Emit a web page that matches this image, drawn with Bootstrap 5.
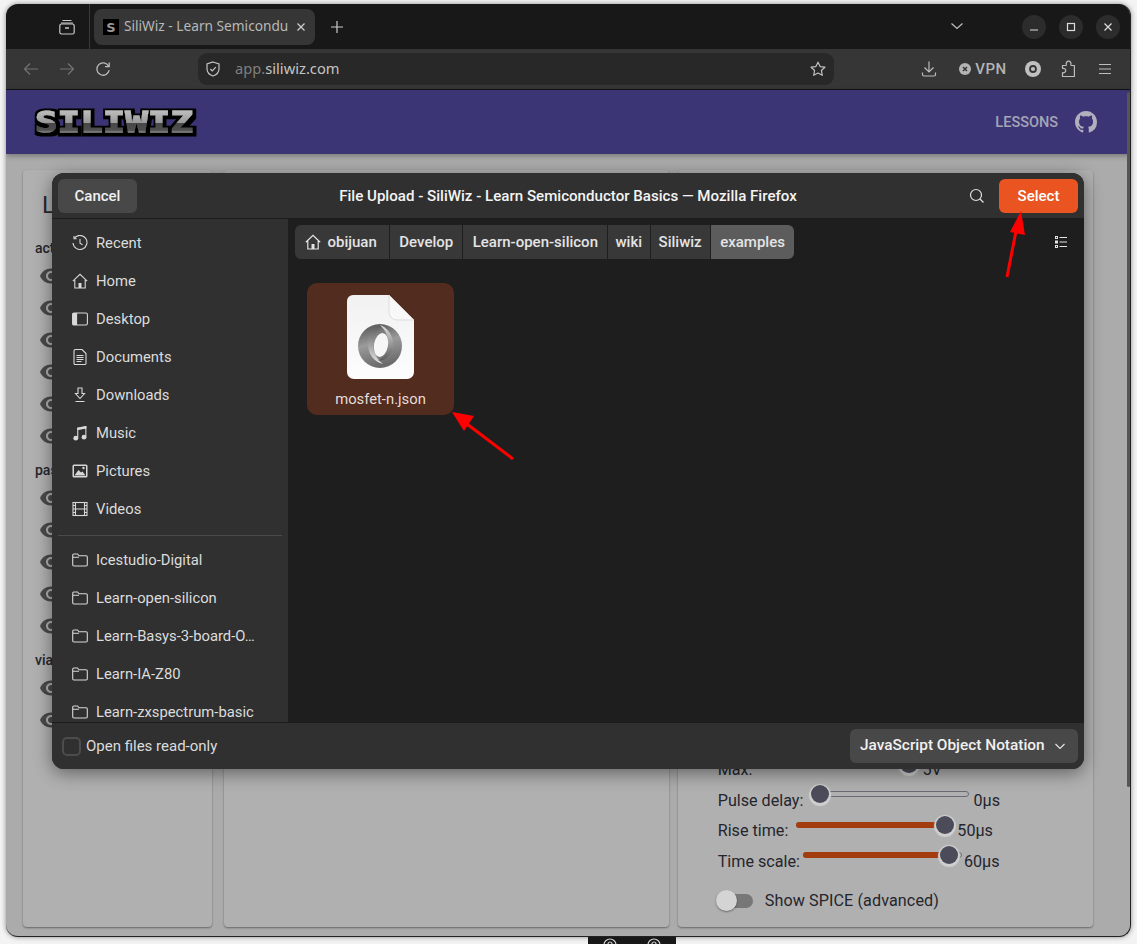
<!DOCTYPE html>
<html lang="en">
<head>
  <meta charset="UTF-8">
  <title>SiliWiz - File Upload</title>
  <link rel="stylesheet" href="https://cdn.jsdelivr.net/npm/bootstrap@5.3.0/dist/css/bootstrap.min.css">
  <style>
    html, body { height: 100%; }
    body { background: #f3f3f3; overflow: hidden; font-family: "Noto Sans", sans-serif; padding-top: 4px; position: relative; }
    svg { display: block; flex: none; }

    /* browser window */
    .ff-window { margin-left: 6px; width: 1125px; height: 933px; border-radius: 12px; overflow: hidden; background: #ababab; box-shadow: 0 0 5px rgba(0,0,0,.45); border-bottom: 1px solid #222; border-right: 1px solid #222; }
    .tab-strip { height: 45px; background: #181818; color: #ccc; }
    .tab-left { width: 84px; height: 45px; border-right: 1px solid #3a3a3a; padding-right: 14px; }
    .ff-tab { width: 221px; height: 36px; margin-left: 4px; margin-top: 5px; background: #363636; border-radius: 8px; padding: 0 9px; color: #b8b8b8; font-size: 13.7px; white-space: nowrap; }
    .ff-tab-title { margin-left: 5px; padding-bottom: 1px; }
    .new-tab { margin: 8px 0 0 15px; }
    .chev { margin-left: auto; margin-right: 45px; margin-top: 15px; }
    .win-ctl { width: 24px; height: 24px; border-radius: 50%; background: #2c2c2c; margin-left: 13px; }
    .win-ctls { margin: 11px 10px 0 0; }

    .tool-bar { height: 41px; background: #363636; border-bottom: 1px solid #111; padding: 0 7px; color: #bbb; }
    .tool-btn { width: 36px; height: 40px; }
    .url-bar { width: 636px; height: 32px; margin-left: 77px; background: #282828; border-radius: 9px; padding: 0 8px 0 7px; font-size: 14.7px; color: #c4c4c4; }
    .url-bar span { color: #7f7f7f; }
    .url-text { margin-left: 14px; padding-bottom: 2px; }
    .vpn-btn { width: 58px; height: 40px; margin-left: 7px; margin-right: 3px; font-size: 15px; color: #b4b4b4; font-weight: 500; letter-spacing: .5px; font-family: Roboto, sans-serif; }

    /* site behind the dialog */
    .page-area { height: 847px; font-family: Roboto, sans-serif; color: #25252d; }
    .site-nav { height: 64px; background: #3c3575; padding: 0 33px 0 24px; box-shadow: 0 2px 5px rgba(0,0,0,.3); }
    .lessons-link { font-size: 14.5px; font-weight: 500; color: #a5a5b5; margin: 2px 17px 0 0; text-decoration: none; }
    .panel-row { padding: 16px 37px 10px 17px; height: 783px; gap: 12px; }
    .dim-card { background: #b0b0b0; border: 0; border-radius: 4px; box-shadow: 0 1px 2px rgba(0,0,0,.4); --bs-card-bg: #b0b0b0; }
    .layers-card { width: 189px; padding: 0 12px; }
    .layers-title { font-size: 24px; line-height: 30px; margin: 20px 0 16px 7px; color: #2b2b2b; font-weight: 400; }
    .group-label { font-size: 14px; line-height: 24px; color: #26262e; font-weight: 500; }
    .group-label.later { margin-top: 6px; }
    .eye-row { height: 32px; padding-left: 4px; }
    .mid-card { width: 446px; }
    .ctl-card { width: 416px; margin-left: -3px; padding: 0 40px 14px 40px; }
    .ctl-line { height: 30.5px; font-size: 16.15px; white-space: nowrap; }
    .sl-track { position: relative; height: 6px; margin-top: -13px; border: 1px solid #6b6b78; border-radius: 3px; }
    .sl-fill { position: absolute; left: -1px; top: -1px; bottom: -1px; background: #a33d10; border-radius: 3px; }
    .sl-knob { position: absolute; top: 50%; width: 18px; height: 18px; margin: -9px 0 0 -9px; border-radius: 50%; background: #4b4b59; box-shadow: 0 1px 1px 2px #cfcfcf; }
    .sw-line { height: 24px; margin-top: 12px; font-size: 16.15px; letter-spacing: .1px; }
    .sw-track { position: relative; width: 37px; height: 14px; margin-left: -2px; margin-right: 12px; }
    .sw-track::before { content: ""; position: absolute; left: 10px; right: 0; top: 0; bottom: 0; background: #777; border-radius: 7px; }
    .sw-knob { position: absolute; left: 0; top: -4px; width: 21px; height: 21px; border-radius: 50%; background: #d4d4d4; box-shadow: 0 1px 2px rgba(0,0,0,.4); }
    .page-scroll { position: absolute; left: 1121px; top: 2px; width: 3px; height: 695px; background: #555; border-radius: 2px; }

    /* GTK file chooser */
    .file-dialog { position: absolute; left: 46px; top: 83px; width: 1032px; height: 596px; background: #1e1e1e; border-radius: 12px; box-shadow: 0 4px 18px rgba(0,0,0,.45); overflow: hidden; color: #eee; font-size: 15px; }
    .dlg-head { height: 46px; background: #303030; border-bottom: 1px solid #1c1c1c; padding: 0 6px; }
    .dlg-btn { height: 34px; width: 79px; border-radius: 6px; border: 0; font-size: 15px; font-weight: 500; padding: 1px 0 0; color: #f0f0f0; --bs-btn-hover-color: #f0f0f0; }
    .dlg-cancel { background: #484848; }
    .dlg-select { background: #e95420; color: #fff; margin-left: 14px; }
    .dlg-title { font-weight: 500; color: #f4f4f4; font-size: 15.1px; padding: 1px 0 0 30px; }
    .dlg-body { height: 503px; }
    .places { width: 236px; background: #303030; overflow: hidden; padding: 5px 0 0; }
    .place-row { height: 38px; padding-left: 20px; gap: 8px; color: #dcdcdc; font-size: 14.8px; white-space: nowrap; background: transparent; border: 0; border-radius: 0; --bs-list-group-bg: transparent; }
    .place-row svg { width: 16px; height: 16px; }
    .place-sep { margin: 7px 6px 5px; height: 1px; background: #4a4a4a; }
    .files-pane { background: #1e1e1e; position: relative; padding: 6px 7px; }
    .path-bar { height: 34px; border-radius: 6px; overflow: hidden; font-weight: 500; color: #e4e4e4; }
    .path-seg { height: 34px; background: #383838; border-right: 1px solid #1e1e1e; padding: 0 9px 0 9.5px; white-space: nowrap; }
    .path-seg.seg-home { padding-right: 12px; gap: 7px; }
    .path-seg.seg-tight { padding: 0 8px 0 7.5px; }
    .path-seg.now { background: #5c5c5c; border-right: 0; }
    .view-toggle { margin-left: auto; margin-right: 10px; }
    .file-tile { width: 147px; height: 132px; margin: 24px 0 0 12px; background: #522c1e; border-radius: 10px; padding-top: 12px; color: #e6dcd8; font-size: 14.8px; }
    .file-name { margin-top: 9px; }
    .dlg-foot { height: 47px; background: #303030; border-top: 1px solid #1c1c1c; padding: 0 6px 0 10px; color: #dcdcdc; font-size: 15px; }
    .ro-check { width: 19px; height: 19px; border: 2px solid #4c4c4c; border-radius: 5px; margin-right: 5px; }
    .filter-btn { margin-left: auto; width: 228px; height: 34px; background: #484848; border-radius: 6px; padding: 0 12px 0 10px; font-weight: 500; color: #f0f0f0; font-size: 15.4px; }

    .arrow-layer { position: absolute; left: 0; top: 0; pointer-events: none; }
    .cut-strip { margin-left: 588px; width: 88px; height: 8px; background: #181818; overflow: hidden; }
  </style>
</head>
<body>
  <svg width="0" height="0" style="position:absolute">
    <symbol id="ic-eye" viewBox="0 0 24 24"><path fill="#4a4a4a" d="M12 4.500C7 4.500 2.730 7.610 1 12c1.730 4.390 6 7.500 11 7.500s9.270-3.110 11-7.500c-1.730-4.390-6-7.500-11-7.500zM12 17c-2.760 0-5-2.240-5-5s2.240-5 5-5 5 2.240 5 5-2.240 5-5 5zm0-8c-1.660 0-3 1.340-3 3s1.340 3 3 3 3-1.340 3-3-1.340-3-3-3z"/></symbol>
    <symbol id="ic-folder" viewBox="0 0 16 16"><path fill="none" stroke="#d8d8d8" stroke-width="1.100" d="M.7 3.200a1.200 1.200 0 0 1 1.200-1.200h3.600l1.500 1.800h7.100a1.200 1.200 0 0 1 1.200 1.200v7.800a1.200 1.200 0 0 1-1.200 1.200H1.900a1.200 1.200 0 0 1-1.200-1.200zM.7 5.300H7"/></symbol>
  </svg>

  <div class="ff-window d-flex flex-column">
    <!-- tabs -->
    <div class="tab-strip d-flex align-items-start">
      <div class="tab-left d-flex align-items-center justify-content-end">
        <svg width="16" height="16" viewBox="0 0 16 16" fill="none" stroke="#c8c8c8" stroke-width="1.2"><path d="M3.500 1.500h9M2 4h12"/><rect x=".8" y="5" width="14.400" height="10" rx="1.800"/><path d="M6 9h4" stroke-width="1.600"/></svg>
      </div>
      <div class="ff-tab d-flex align-items-center">
        <svg width="16" height="16" viewBox="0 0 16 16"><rect width="16" height="16" fill="#000"/><text x="8" y="13" text-anchor="middle" font-family="DejaVu Sans" font-weight="700" font-size="13" fill="#999">S</text></svg>
        <div class="ff-tab-title">SiliWiz - Learn Semicondu</div>
        <svg class="ms-auto" width="10" height="10" viewBox="0 0 10 10" stroke="#ccc" stroke-width="1.300"><path d="M1.500 1.500l7 7M8.500 1.500l-7 7"/></svg>
      </div>
      <svg class="new-tab" width="14" height="30" viewBox="0 0 14 14" stroke="#ccc" stroke-width="1.200"><path d="M7 1v12M1 7h12"/></svg>
      <svg class="chev" width="14" height="14" viewBox="0 0 14 14" fill="none" stroke="#c0c0c0" stroke-width="1.200"><path d="M1.500 4.500L7 9.500l5.500-5"/></svg>
      <div class="win-ctls d-flex">
        <div class="win-ctl d-flex align-items-center justify-content-center"><svg width="10" height="10" viewBox="0 0 10 10" stroke="#ddd" stroke-width="1.200"><path d="M1 8h8"/></svg></div>
        <div class="win-ctl d-flex align-items-center justify-content-center"><svg width="10" height="10" viewBox="0 0 10 10" fill="none" stroke="#ddd" stroke-width="1.200"><rect x="1.500" y="1.500" width="7" height="7"/></svg></div>
        <div class="win-ctl d-flex align-items-center justify-content-center"><svg width="10" height="10" viewBox="0 0 10 10" stroke="#ddd" stroke-width="1.200"><path d="M1.500 1.500l7 7M8.500 1.500l-7 7"/></svg></div>
      </div>
    </div>

    <!-- toolbar -->
    <div class="tool-bar d-flex align-items-center">
      <div class="tool-btn d-flex align-items-center justify-content-center"><svg width="16" height="16" viewBox="0 0 16 16" fill="none" stroke="#737373" stroke-width="1.200"><path d="M15 8H1.500M7 2.500L1.500 8 7 13.500"/></svg></div>
      <div class="tool-btn d-flex align-items-center justify-content-center"><svg width="16" height="16" viewBox="0 0 16 16" fill="none" stroke="#737373" stroke-width="1.200"><path d="M1 8h13.500M9 2.500L14.500 8 9 13.500"/></svg></div>
      <div class="tool-btn d-flex align-items-center justify-content-center"><svg width="16" height="16" viewBox="0 0 16 16" fill="none" stroke="#bdbdbd" stroke-width="1.300"><path d="M13.600 5.200A6.200 6.200 0 1 0 14.200 9"/><path d="M14.200 1.500v4.200H10"/></svg></div>
      <div class="url-bar d-flex align-items-center">
        <svg width="16" height="16" viewBox="0 0 16 16" fill="none" stroke="#c4c4c4" stroke-width="1.200"><path d="M8 1l6 2v5c0 3.500-2.600 5.800-6 7-3.400-1.200-6-3.500-6-7V3z"/><path d="M5.300 8l2 2 3.500-3.800"/></svg>
        <div class="url-text"><span>app.</span>siliwiz.com</div>
        <svg class="ms-auto" width="16" height="16" viewBox="0 0 16 16" fill="none" stroke="#c0c0c0" stroke-width="1.200"><path d="M8 1.200l2.100 4.400 4.800.6-3.500 3.300.9 4.800L8 12l-4.300 2.300.9-4.800L1.100 6.200l4.800-.6z" stroke-linejoin="round"/></svg>
      </div>
      <div class="tool-btn ms-auto d-flex align-items-center justify-content-center"><svg width="16" height="16" viewBox="0 0 16 16" fill="none" stroke="#bdbdbd" stroke-width="1.200"><path d="M8 .5v10M3.500 6.500L8 11l4.500-4.500M1.500 11.500v2a1.500 1.500 0 0 0 1.500 1.500h10a1.500 1.500 0 0 0 1.500-1.500v-2"/></svg></div>
      <div class="vpn-btn d-flex align-items-center justify-content-center gap-1">
        <svg width="12" height="12" viewBox="0 0 12 12"><circle cx="6" cy="6" r="6" fill="#b4b4b4"/><path d="M4 4l4 4M8 4l-4 4" stroke="#363636" stroke-width="1.500"/></svg>
        <span>VPN</span>
      </div>
      <div class="tool-btn d-flex align-items-center justify-content-center"><svg width="16" height="16" viewBox="0 0 16 16"><circle cx="8" cy="8" r="8" fill="#c0c0c0"/><circle cx="8" cy="8" r="3" fill="none" stroke="#363636" stroke-width="1.800"/></svg></div>
      <div class="tool-btn d-flex align-items-center justify-content-center"><svg width="16" height="18" viewBox="0 0 16 18" fill="none" stroke="#bdbdbd" stroke-width="1.200" stroke-linejoin="round"><path d="M1.500 5.500h3.200c.8 0 .9-.7.6-1.300-.4-.9.3-3 2.300-3s2.700 2.100 2.300 3c-.3.6-.2 1.300.6 1.300h2.900v11H1.500v-3.800c1.700.4 3.300-.6 3.300-2.200S3.200 8 1.500 8.400z"/></svg></div>
      <div class="tool-btn d-flex align-items-center justify-content-center"><svg width="14" height="12" viewBox="0 0 14 12" stroke="#bdbdbd" stroke-width="1.200"><path d="M1 1.500h12M1 6h12M1 10.500h12"/></svg></div>
    </div>

    <!-- site -->
    <div class="page-area position-relative">
      <nav class="navbar site-nav flex-nowrap">
        <svg width="172" height="36" viewBox="0 0 172 36">
          <defs>
            <linearGradient id="logoFill" gradientUnits="userSpaceOnUse" x1="0" y1="6" x2="0" y2="29"><stop offset="0" stop-color="#c0c0c0"/><stop offset=".55" stop-color="#9a9a9a"/><stop offset=".57" stop-color="#474747"/><stop offset=".88" stop-color="#505050"/><stop offset="1" stop-color="#a0a0a0"/></linearGradient>
            <filter id="logoEdge" x="-5%" y="-30%" width="110%" height="160%">
              <feMorphology in="SourceAlpha" operator="dilate" radius="2.600" result="fat"/>
              <feOffset in="fat" dx="1" dy="1" result="fatShift"/>
              <feFlood flood-color="#000"/>
              <feComposite in2="fatShift" operator="in" result="edge"/>
              <feMerge><feMergeNode in="edge"/><feMergeNode in="SourceGraphic"/></feMerge>
            </filter>
          </defs>
          <text x="5" y="28" font-family="DejaVu Sans Mono" font-weight="700" font-size="29" textLength="158" lengthAdjust="spacingAndGlyphs" fill="url(#logoFill)" stroke="url(#logoFill)" stroke-width="1.100" filter="url(#logoEdge)">SILIWIZ</text>
        </svg>
        <div class="d-flex align-items-center ms-auto">
          <a class="lessons-link" href="#">LESSONS</a>
          <svg width="22" height="22" viewBox="0 0 16 16" fill="#b0b0bc"><path d="M8 0C3.580 0 0 3.580 0 8c0 3.540 2.290 6.530 5.470 7.590.4.070.55-.17.55-.38 0-.19-.01-.82-.01-1.490-2.010.37-2.530-.49-2.690-.94-.09-.23-.48-.94-.82-1.130-.28-.15-.68-.52-.01-.53.63-.01 1.080.58 1.230.82.72 1.210 1.870.87 2.330.66.07-.52.28-.87.51-1.070-1.780-.2-3.640-.89-3.640-3.950 0-.87.31-1.590.82-2.150-.08-.2-.36-1.020.08-2.120 0 0 .67-.21 2.200.82.64-.18 1.320-.27 2-.27.68 0 1.360.09 2 .27 1.530-1.040 2.200-.82 2.200-.82.44 1.100.16 1.920.08 2.120.51.56.82 1.270.82 2.150 0 3.070-1.870 3.750-3.650 3.950.29.25.54.73.54 1.480 0 1.070-.01 1.930-.01 2.200 0 .21.15.46.55.38A8.013 8.013 0 0016 8c0-4.420-3.580-8-8-8z"/></svg>
        </div>
      </nav>

      <div class="panel-row d-flex">
        <div class="card dim-card layers-card">
          <div class="layers-title">L</div>
          <div class="group-label">active</div>
          <div class="eye-row d-flex align-items-center"><svg width="24" height="24"><use href="#ic-eye"/></svg></div>
          <div class="eye-row d-flex align-items-center"><svg width="24" height="24"><use href="#ic-eye"/></svg></div>
          <div class="eye-row d-flex align-items-center"><svg width="24" height="24"><use href="#ic-eye"/></svg></div>
          <div class="eye-row d-flex align-items-center"><svg width="24" height="24"><use href="#ic-eye"/></svg></div>
          <div class="eye-row d-flex align-items-center"><svg width="24" height="24"><use href="#ic-eye"/></svg></div>
          <div class="eye-row d-flex align-items-center"><svg width="24" height="24"><use href="#ic-eye"/></svg></div>
          <div class="group-label later">passive</div>
          <div class="eye-row d-flex align-items-center"><svg width="24" height="24"><use href="#ic-eye"/></svg></div>
          <div class="eye-row d-flex align-items-center"><svg width="24" height="24"><use href="#ic-eye"/></svg></div>
          <div class="eye-row d-flex align-items-center"><svg width="24" height="24"><use href="#ic-eye"/></svg></div>
          <div class="eye-row d-flex align-items-center"><svg width="24" height="24"><use href="#ic-eye"/></svg></div>
          <div class="eye-row d-flex align-items-center"><svg width="24" height="24"><use href="#ic-eye"/></svg></div>
          <div class="group-label later">vias</div>
          <div class="eye-row d-flex align-items-center"><svg width="24" height="24"><use href="#ic-eye"/></svg></div>
          <div class="eye-row d-flex align-items-center"><svg width="24" height="24"><use href="#ic-eye"/></svg></div>
        </div>

        <div class="card dim-card mid-card"></div>

        <div class="card dim-card ctl-card justify-content-end">
          <div class="ctl-line d-flex align-items-center">
            <span>Max:</span>
            <div class="sl-track" style="width: 125px; margin-left: 31px"><div class="sl-knob" style="left: 124px"></div></div>
            <span style="margin-left: 14px">5V</span>
          </div>
          <div class="ctl-line d-flex align-items-center">
            <span>Pulse delay:</span>
            <div class="sl-track ms-2" style="width: 158px"><div class="sl-knob" style="left: 8px"></div></div>
            <span class="ms-1">0μs</span>
          </div>
          <div class="ctl-line d-flex align-items-center">
            <span>Rise time:</span>
            <div class="sl-track ms-2" style="width: 157px"><div class="sl-fill" style="width: 148px"></div><div class="sl-knob" style="left: 148px"></div></div>
            <span class="ms-1">50μs</span>
          </div>
          <div class="ctl-line d-flex align-items-center">
            <span>Time scale:</span>
            <div class="sl-track" style="width: 159px; margin-left: 3px"><div class="sl-fill" style="width: 145px"></div><div class="sl-knob" style="left: 145px"></div></div>
            <span style="margin-left: 2px">60μs</span>
          </div>
          <div class="sw-line d-flex align-items-center">
            <div class="sw-track"><div class="sw-knob"></div></div>
            <span>Show SPICE (advanced)</span>
          </div>
        </div>
      </div>
      <div class="page-scroll"></div>

      <!-- file chooser over the page -->
      <div class="file-dialog d-flex flex-column">
        <div class="dlg-head d-flex align-items-center">
          <button class="btn dlg-btn dlg-cancel">Cancel</button>
          <div class="dlg-title flex-grow-1 text-center">File Upload - SiliWiz - Learn Semiconductor Basics — Mozilla Firefox</div>
          <svg width="16" height="16" viewBox="0 0 16 16" fill="none" stroke="#e0e0e0" stroke-width="1.200"><circle cx="7" cy="7" r="5.500"/><path d="M11 11l3.500 3.500"/></svg>
          <button class="btn dlg-btn dlg-select">Select</button>
        </div>
        <div class="dlg-body d-flex">
          <div class="places">
            <div class="list-group list-group-flush">
              <div class="list-group-item d-flex align-items-center place-row"><svg viewBox="0 0 16 16" fill="none" stroke="#d8d8d8" stroke-width="1.100"><path d="M2.300 3.300A7 7 0 1 1 1 8"/><path d="M2 1v2.700h2.700M8 4v4.300l2.600 1.500"/></svg>Recent</div>
              <div class="list-group-item d-flex align-items-center place-row"><svg viewBox="0 0 16 16" fill="none" stroke="#d8d8d8" stroke-width="1.100"><path d="M.8 8.200L8 1.300l7.200 6.900M2.800 7v8h10.400V7"/><rect x="6.500" y="10" width="3" height="5" fill="#d8d8d8" stroke="none"/></svg>Home</div>
              <div class="list-group-item d-flex align-items-center place-row"><svg viewBox="0 0 16 16" fill="none" stroke="#d8d8d8" stroke-width="1.100"><rect x=".6" y="2" width="14.800" height="12" rx="1.500"/><rect x=".6" y="2" width="4.500" height="12" fill="#d8d8d8" stroke="none"/></svg>Desktop</div>
              <div class="list-group-item d-flex align-items-center place-row"><svg viewBox="0 0 16 16" fill="none" stroke="#d8d8d8" stroke-width="1.100"><path d="M2 2a1.500 1.500 0 0 1 1.500-1.500H10L14 4.500v10A1.200 1.200 0 0 1 12.800 15.500H3.200A1.200 1.200 0 0 1 2 14.300z"/><path d="M4.500 6.500h7M4.500 8.500h7M4.500 10.500h7M4.500 12.500h5"/></svg>Documents</div>
              <div class="list-group-item d-flex align-items-center place-row"><svg viewBox="0 0 16 16" fill="none" stroke="#d8d8d8" stroke-width="1.100"><path d="M6 1h4v5.500h2.500L8 11.500 3.500 6.500H6zM3.500 14.500h9"/></svg>Downloads</div>
              <div class="list-group-item d-flex align-items-center place-row"><svg viewBox="0 0 16 16" fill="#d8d8d8"><circle cx="3.800" cy="13.200" r="2.400"/><circle cx="12" cy="12.200" r="2.400"/><path d="M5.200 13V2.800L14.400 1v11h-1.100V3.400L6.300 4.700V13z"/><path d="M5.200 2.800L14.400 1v2.400L5.200 5z"/></svg>Music</div>
              <div class="list-group-item d-flex align-items-center place-row"><svg viewBox="0 0 16 16"><rect x=".5" y="1.500" width="15" height="13" rx="1.500" fill="#d8d8d8"/><rect x="2" y="3" width="12" height="10" fill="#303030"/><path d="M2.500 12.500l4-5.500 2.500 2.500 1.500-1 3 4z" fill="#d8d8d8"/><circle cx="11.500" cy="5" r="1.200" fill="#d8d8d8"/></svg>Pictures</div>
              <div class="list-group-item d-flex align-items-center place-row"><svg viewBox="0 0 16 16" fill="none" stroke="#d8d8d8" stroke-width="1.100"><rect x="1" y="1.500" width="14" height="13"/><path d="M3.500 1.500v13M12.500 1.500v13M3.500 8h9M1 4.500h2.500M1 8h2.500M1 11.500h2.500M12.500 4.500H15M12.500 8H15M12.500 11.500H15"/></svg>Videos</div>
              <div class="place-sep"></div>
              <div class="list-group-item d-flex align-items-center place-row"><svg><use href="#ic-folder"/></svg>Icestudio-Digital</div>
              <div class="list-group-item d-flex align-items-center place-row"><svg><use href="#ic-folder"/></svg>Learn-open-silicon</div>
              <div class="list-group-item d-flex align-items-center place-row"><svg><use href="#ic-folder"/></svg>Learn-Basys-3-board-O…</div>
              <div class="list-group-item d-flex align-items-center place-row"><svg><use href="#ic-folder"/></svg>Learn-IA-Z80</div>
              <div class="list-group-item d-flex align-items-center place-row"><svg><use href="#ic-folder"/></svg>Learn-zxspectrum-basic</div>
            </div>
          </div>
          <div class="files-pane flex-grow-1">
            <div class="d-flex align-items-center">
              <div class="path-bar d-flex align-items-center">
                <div class="path-seg seg-home d-flex align-items-center"><svg width="16" height="16" viewBox="0 0 16 16" fill="none" stroke="#e4e4e4" stroke-width="1.200"><path d="M.8 8.200L8 1.300l7.200 6.900M2.800 7v8h10.400V7"/><rect x="6.500" y="10" width="3" height="5" fill="#e4e4e4" stroke="none"/></svg>obijuan</div>
                <div class="path-seg d-flex align-items-center">Develop</div>
                <div class="path-seg d-flex align-items-center">Learn-open-silicon</div>
                <div class="path-seg seg-tight d-flex align-items-center">wiki</div>
                <div class="path-seg seg-tight d-flex align-items-center">Siliwiz</div>
                <div class="path-seg now d-flex align-items-center">examples</div>
              </div>
              <svg class="view-toggle" width="12" height="12" viewBox="0 0 12 12" fill="none" stroke="#e4e4e4"><path d="M4.500 1.500H12M4.500 6H12M4.500 10.500H12"/><rect x=".5" y=".5" width="2" height="2"/><rect x=".5" y="5" width="2" height="2"/><rect x=".5" y="9.500" width="2" height="2"/></svg>
            </div>
            <div class="file-tile d-flex flex-column align-items-center">
              <svg width="67" height="84" viewBox="0 0 67 84">
                <defs>
                  <linearGradient id="docFill" x1="0" y1="0" x2="0" y2="1"><stop offset="0" stop-color="#f1f1f1"/><stop offset="1" stop-color="#fdfdfd"/></linearGradient>
                  <linearGradient id="ringBase" x1="0" y1="0" x2=".25" y2="1"><stop offset="0" stop-color="#4e4e4e"/><stop offset=".5" stop-color="#9a9a9a"/><stop offset="1" stop-color="#6c6c6c"/></linearGradient>
                  <linearGradient id="swoopL" x1="0" y1="0" x2="0" y2="1"><stop offset="0" stop-color="#5a5a5a"/><stop offset="1" stop-color="#e4e4e4"/></linearGradient>
                  <linearGradient id="swoopR" x1="0" y1="0" x2="0" y2="1"><stop offset="0" stop-color="#e0e0e0"/><stop offset="1" stop-color="#585858"/></linearGradient>
                </defs>
                <path d="M6 0H42L67 25V77a7 7 0 0 1-7 7H7a7 7 0 0 1-7-7V6a6 6 0 0 1 6-6z" fill="url(#docFill)"/>
                <path d="M42 0L67 25H50a8 8 0 0 1-8-8z" fill="#f8f8f8" stroke="#d6d2d0" stroke-width=".7"/>
                <circle cx="33" cy="51" r="22" fill="url(#ringBase)"/>
                <path d="M37 30C24 31 20 42 21 51 22 61 28 67 36 69 28 62 26 56 26 49 26 40 30 34 37 30z" fill="url(#swoopL)"/>
                <path d="M31 66C42 65 47 56 46 47 45 38 39 32 33 30 39 36 42 42 41 49 40 58 36 63 31 66z" fill="url(#swoopR)"/>
                <ellipse cx="34" cy="50" rx="7" ry="12" fill="#f6f6f6" transform="rotate(10 34 50)"/>
              </svg>
              <div class="file-name">mosfet-n.json</div>
            </div>
          </div>
        </div>
        <div class="dlg-foot d-flex align-items-center">
          <div class="ro-check"></div>
          <div>Open files read-only</div>
          <div class="filter-btn d-flex align-items-center justify-content-between">
            <span>JavaScript Object Notation</span>
            <svg width="12" height="12" viewBox="0 0 12 12" fill="none" stroke="#e8e8e8" stroke-width="1.100"><path d="M1.500 4l4.500 4.500L10.500 4"/></svg>
          </div>
        </div>
      </div>
    </div>
  </div>

  <div class="cut-strip d-flex justify-content-around">
    <svg width="20" height="8" viewBox="0 0 20 8" fill="none" stroke="#ccc" stroke-width="1.200"><path d="M4 8a6 6 0 0 1 12 0"/><circle cx="10" cy="7" r="2"/></svg>
    <svg width="20" height="8" viewBox="0 0 20 8" fill="none" stroke="#ccc" stroke-width="1.200"><path d="M4 8a6 6 0 0 1 12 0"/><circle cx="10" cy="7" r="2"/></svg>
  </div>

  <!-- red annotation arrows -->
  <svg class="arrow-layer" width="1137" height="944" viewBox="0 0 1137 944" fill="#f00" stroke="none">
    <path d="M1007 277L1017 226" stroke="#f00" stroke-width="3" fill="none"/>
    <path d="M1021 211L1010 232 1025 235z"/>
    <path d="M513 459L467 424" stroke="#f00" stroke-width="3" fill="none"/>
    <path d="M452 412L474 416 464 431z"/>
  </svg>
</body>
</html>
